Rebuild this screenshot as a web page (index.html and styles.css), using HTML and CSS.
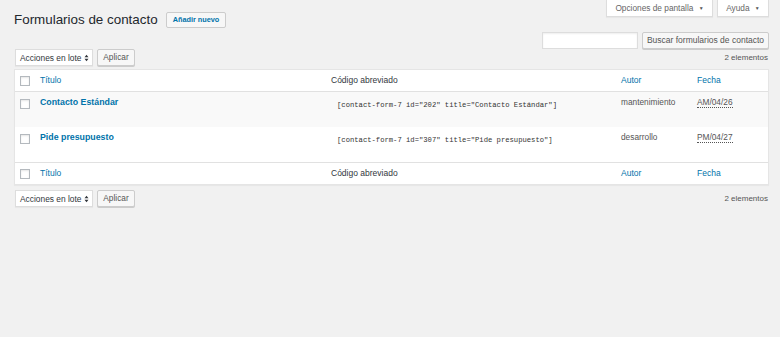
FILE: index.html
```html
<!DOCTYPE html>
<html lang="es">
<head>
<meta charset="utf-8">
<title>Formularios de contacto</title>
<link rel="stylesheet" href="styles.css">
</head>
<body>
<div class="wrap">
  <div class="top">
    <div class="title-area">
      <h1 class="page-title">Formularios de contacto</h1>
      <a class="add-new">Añadir nuevo</a>
    </div>
    <div class="screen-links">
      <span class="tab tab-options">Opciones de pantalla <span class="tri">&#9660;</span></span>
      <span class="tab tab-help">Ayuda <span class="tri">&#9660;</span></span>
    </div>
  </div>

  <div class="search-row">
    <span class="search-input"></span>
    <span class="btn btn-search">Buscar formularios de contacto</span>
  </div>

  <div class="tablenav tablenav-top">
    <div class="bulk">
      <span class="select">Acciones en lote
        <svg class="updown" width="5" height="8" viewBox="0 0 5 8"><path d="M0.5 3.2 L2.5 0.8 L4.5 3.2 Z M0.5 4.8 L2.5 7.2 L4.5 4.8 Z" fill="#32373c"/></svg>
      </span>
      <span class="btn btn-apply">Aplicar</span>
    </div>
    <span class="num">2 elementos</span>
  </div>

  <table class="list">
    <colgroup>
      <col class="c-check">
      <col class="c-title">
      <col class="c-code">
      <col class="c-author">
      <col class="c-date">
    </colgroup>
    <thead>
      <tr>
        <th class="check"><span class="cb"></span></th>
        <th class="link">Título</th>
        <th>Código abreviado</th>
        <th class="link">Autor</th>
        <th class="link">Fecha</th>
      </tr>
    </thead>
    <tbody>
      <tr class="alt">
        <td class="check"><span class="cb cb-row"></span></td>
        <td><a class="row-title">Contacto Estándar</a></td>
        <td><span class="shortcode">[contact-form-7 id="202" title="Contacto Estándar"]</span></td>
        <td class="author">mantenimiento</td>
        <td class="date"><abbr>AM/04/26</abbr></td>
      </tr>
      <tr>
        <td class="check"><span class="cb cb-row"></span></td>
        <td><a class="row-title">Pide presupuesto</a></td>
        <td><span class="shortcode">[contact-form-7 id="307" title="Pide presupuesto"]</span></td>
        <td class="author">desarrollo</td>
        <td class="date"><abbr>PM/04/27</abbr></td>
      </tr>
    </tbody>
    <tfoot>
      <tr>
        <th class="check"><span class="cb"></span></th>
        <th class="link">Título</th>
        <th>Código abreviado</th>
        <th class="link">Autor</th>
        <th class="link">Fecha</th>
      </tr>
    </tfoot>
  </table>

  <div class="tablenav tablenav-bottom">
    <div class="bulk">
      <span class="select">Acciones en lote
        <svg class="updown" width="5" height="8" viewBox="0 0 5 8"><path d="M0.5 3.2 L2.5 0.8 L4.5 3.2 Z M0.5 4.8 L2.5 7.2 L4.5 4.8 Z" fill="#32373c"/></svg>
      </span>
      <span class="btn btn-apply">Aplicar</span>
    </div>
    <span class="num">2 elementos</span>
  </div>
</div>
</body>
</html>
```

FILE: styles.css
```css
html, body {
  margin: 0;
  padding: 0;
  background: #f1f1f1;
  height: 100%;
}
body {
  font-family: "Liberation Sans", Arial, sans-serif;
  color: #444;
  font-size: 8.3px;
}
.wrap {
  padding: 0 11px 0 14px;
}
.top {
  display: flex;
  justify-content: space-between;
  align-items: flex-start;
  height: 31px;
}
.title-area {
  display: flex;
  align-items: center;
  gap: 8px;
  padding-top: 12px;
}
.page-title {
  margin: 0;
  font-size: 13.4px;
  font-weight: 400;
  line-height: 16px;
  color: #23282d;
}
.add-new {
  display: inline-block;
  box-sizing: border-box;
  height: 16px;
  line-height: 14px;
  padding: 0 6px;
  border: 1px solid #ccc;
  border-radius: 2px;
  background: #f7f7f7;
  color: #0073aa;
  font-weight: 700;
  font-size: 7.3px;
}
.screen-links {
  display: flex;
  gap: 4px;
}
.tab {
  display: inline-block;
  box-sizing: border-box;
  height: 17px;
  line-height: 16px;
  background: #fff;
  border: 1px solid #ddd;
  border-top: none;
  box-shadow: 0 1px 1px rgba(0,0,0,.04);
  color: #666;
  font-size: 8.3px;
  text-align: center;
}
.tab-options { width: 107px; }
.tab-help { width: 52px; }
.tri {
  font-size: 5px;
  vertical-align: 1px;
  margin-left: 3px;
  color: #555;
}
.search-row {
  display: flex;
  justify-content: flex-end;
  gap: 4px;
  height: 17px;
  padding-top: 1px;
}
.search-input {
  display: block;
  box-sizing: border-box;
  width: 96px;
  height: 17px;
  background: #fff;
  border: 1px solid #ddd;
  box-shadow: inset 0 1px 2px rgba(0,0,0,.07);
}
.btn {
  display: inline-block;
  box-sizing: border-box;
  height: 17px;
  line-height: 15px;
  padding: 0 7px;
  background: #f7f7f7;
  border: 1px solid #ccc;
  border-radius: 2px;
  box-shadow: 0 1px 0 #ccc;
  color: #555;
  font-size: 8.3px;
  text-align: center;
}
.btn-search {
  width: 127px;
  padding: 0;
  font-size: 8.5px;
}
.btn-apply {
  width: 38px;
  padding: 0;
}
.tablenav {
  display: flex;
  justify-content: space-between;
  align-items: center;
  height: 17px;
}
.tablenav-top {
  margin-top: 0;
  margin-bottom: 3px;
}
.tablenav-bottom {
  margin-top: 5px;
}
.bulk {
  display: flex;
  gap: 4px;
  padding-left: 1px;
}
.select {
  display: flex;
  align-items: center;
  justify-content: space-between;
  box-sizing: border-box;
  width: 78px;
  height: 17px;
  padding: 0 3px 0 4px;
  background: #fff;
  border: 1px solid #ddd;
  box-shadow: 0 1px 1px rgba(0,0,0,.04);
  color: #32373c;
  font-size: 8.4px;
  white-space: nowrap;
}
.updown { display: block; flex: none; }
.num {
  color: #555;
  font-size: 8px;
  padding-right: 1px;
}
.list {
  width: 100%;
  table-layout: fixed;
  border-spacing: 0;
  background: #fff;
  border: 1px solid #e5e5e5;
  box-shadow: 0 1px 1px rgba(0,0,0,.04);
}
.c-check { width: 20px; }
.c-title { width: 291px; }
.c-code { width: 290px; }
.c-author { width: 76px; }
.list th {
  text-align: left;
  font-weight: 400;
  font-size: 8.5px;
  color: #32373c;
  height: 21px;
  padding: 0 5px;
  line-height: 21px;
  vertical-align: middle;
  white-space: nowrap;
}
.list thead th { border-bottom: 1px solid #e1e1e1; }
.list tfoot th { border-top: 1px solid #e1e1e1; }
.list th.link { color: #0073aa; }
.list td {
  height: 35px;
  box-sizing: border-box;
  padding: 4px 5px 0;
  line-height: 12px;
  vertical-align: top;
  white-space: nowrap;
}
.list tbody tr.alt td { background: #f9f9f9; }
.cb {
  display: block;
  box-sizing: border-box;
  width: 10px;
  height: 10px;
  border: 1px solid #b4b9be;
  background: #fff;
  box-shadow: inset 0 1px 2px rgba(0,0,0,.1);
}
.cb-row { margin-top: 3px; }
.row-title {
  color: #0073aa;
  font-weight: 700;
  font-size: 8.8px;
}
.shortcode {
  display: inline-block;
  padding: 3px 0 0 6px;
  font-family: "Liberation Mono", "DejaVu Sans Mono", monospace;
  font-size: 7.2px;
  color: #333;
}
.author {
  color: #555;
  font-size: 8.3px;
}
.date abbr {
  color: #555;
  font-size: 8.3px;
  text-decoration: none;
  border-bottom: 1px dotted #555;
}
```
